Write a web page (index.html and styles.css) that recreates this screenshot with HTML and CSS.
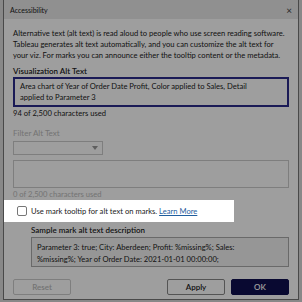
FILE: index.html
```html
<!DOCTYPE html>
<html lang="en">
<head>
    <meta charset="UTF-8">
    <title>Accessibility</title>
    <link rel="stylesheet" href="styles.css">
</head>
<body>
    <div class="dialog">
        <div class="title-bar">
            <span class="title">Accessibility</span>
            <span class="close">&times;</span>
        </div>

        <div class="content">
            <p class="intro">Alternative text (alt text) is read aloud to people who use screen reading software. Tableau generates alt text automatically, and you can customize the alt text for your viz. For marks you can announce either the tooltip content or the metadata.</p>

            <div class="label">Visualization Alt Text</div>
            <div class="text-box active">Area chart of Year of Order Date Profit, Color applied to Sales, Detail applied to Parameter 3</div>
            <div class="count">94 of 2,500 characters used</div>

            <div class="label filter disabled">Filter Alt Text</div>
            <div class="select">
                <svg width="6" height="4" viewBox="0 0 6 4"><path d="M0 0h6L3 4z" fill="#9a9a9a"/></svg>
            </div>
            <div class="text-box empty"></div>
            <div class="count disabled">0 of 2,500 characters used</div>
        </div>

        <div class="highlight">
            <span class="checkbox"></span>
            <span>Use mark tooltip for alt text on marks. <a class="link">Learn More</a></span>
        </div>

        <div class="content sample">
            <div class="label">Sample mark alt text description</div>
            <div class="sample-box">Parameter 3: true; City: Aberdeen; Profit: %missing%; Sales: %missing%; Year of Order Date: 2021-01-01 00:00:00;</div>
        </div>

        <div class="buttons">
            <button class="btn disabled">Reset</button>
            <div class="spacer"></div>
            <button class="btn">Apply</button>
            <button class="btn primary">OK</button>
        </div>
    </div>
</body>
</html>
```

FILE: styles.css
```css
* {
    margin: 0;
    padding: 0;
    box-sizing: border-box;
}

body {
    font-family: Lato, "Liberation Sans", sans-serif;
    font-size: 7.6px;
    background: #dcdcdc;
    color: #222;
    width: 302px;
    height: 302px;
    overflow: hidden;
}

.dialog {
    width: 296px;
    height: 300px;
    margin-left: 3px;
    background: #fff;
    border: 1px solid #777;
    border-top: none;
}

.title-bar {
    height: 19px;
    background: #e8e8e8;
    display: flex;
    align-items: center;
    justify-content: space-between;
    padding: 0 6px 0 6px;
    font-size: 7px;
    color: #222;
}

.close {
    font-size: 10px;
    color: #444;
}

.content {
    padding: 0 9px;
}

.intro {
    line-height: 11px;
    margin-top: 9px;
}

.label {
    font-size: 8px;
    font-weight: 600;
    line-height: 11px;
    margin-top: 5px;
}

.label.filter {
    margin-top: 9px;
}

.label.disabled,
.count.disabled {
    color: #bbb;
    font-weight: 400;
}

.text-box {
    height: 30px;
    border: 1px solid #ccc;
    line-height: 11px;
    padding: 3px 5px;
}

.text-box.active {
    border: 2px solid #2a2a8c;
    padding: 2px 15px 2px 5px;
}

.text-box.empty {
    margin-top: 5px;
    height: 28px;
}

.count {
    line-height: 11px;
    margin-top: 1px;
}

.select {
    width: 90px;
    height: 14px;
    margin-top: 2px;
    border: 1px solid #ccc;
    display: flex;
    align-items: center;
    justify-content: flex-end;
    padding-right: 4px;
}

.highlight {
    height: 22px;
    width: 230px;
    background: #fff;
    display: flex;
    align-items: center;
    gap: 4px;
    padding-left: 13px;
    position: relative;
    box-shadow: 0 0 0 400px rgba(0, 0, 0, 0.38);
}

.checkbox {
    width: 10px;
    height: 10px;
    border: 1px solid #777;
    border-radius: 2px;
}

.link {
    color: #1f5e9e;
    text-decoration: underline;
}

.sample {
    padding-left: 27px;
}

.sample .label {
    margin-top: 3px;
}

.sample-box {
    margin-top: 1px;
    height: 30px;
    border: 1px solid #aaa;
    background: #f2f2f2;
    line-height: 12px;
    padding: 3px 24px 3px 5px;
}

.buttons {
    display: flex;
    gap: 6px;
    padding: 12px 9px 0 9px;
}

.spacer {
    flex: 1;
}

.btn {
    width: 58px;
    height: 16px;
    font-family: inherit;
    font-size: 8px;
    font-weight: 600;
    background: #fff;
    border: 1px solid #888;
    border-radius: 2px;
    color: #222;
}

.btn.disabled {
    color: #bbb;
    border-color: #ccc;
}

.btn.primary {
    background: #101050;
    border-color: #101050;
    color: #fff;
}
```
